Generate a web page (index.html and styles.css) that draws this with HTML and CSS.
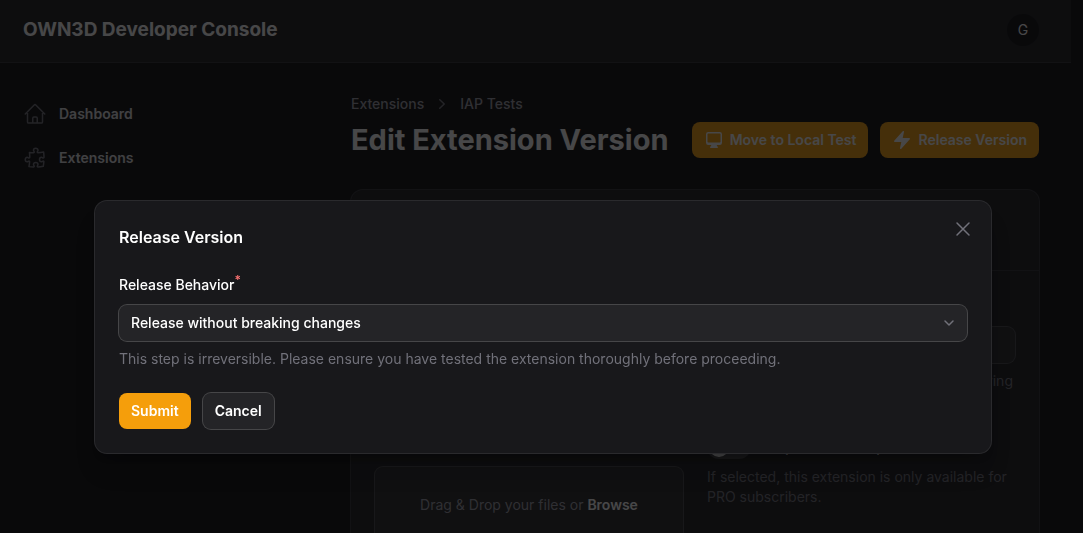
FILE: index.html
```html
<!DOCTYPE html>
<html lang="en">
<head>
<meta charset="utf-8">
<meta name="viewport" content="width=device-width, initial-scale=1">
<title>Edit Extension Version</title>
<link rel="stylesheet" href="styles.css">
</head>
<body>
<div class="page">
  <header class="topbar">
    <a class="brand" href="#">OWN3D Developer Console</a>
    <button class="avatar" type="button">G</button>
  </header>
  <div class="shell">
    <nav class="sidebar">
      <a class="nav-item" href="#">
        <svg class="icon-lg" viewBox="0 0 24 24" fill="none" stroke="currentColor" stroke-width="1.5" stroke-linecap="round" stroke-linejoin="round"><path d="m2.25 12 8.954-8.955c.44-.439 1.152-.439 1.591 0L21.75 12M4.5 9.75v10.125c0 .621.504 1.125 1.125 1.125H9.75v-4.875c0-.621.504-1.125 1.125-1.125h2.25c.621 0 1.125.504 1.125 1.125V21h4.125c.621 0 1.125-.504 1.125-1.125V9.75M8.25 21h8.25"/></svg>
        <span>Dashboard</span>
      </a>
      <a class="nav-item" href="#">
        <svg class="icon-lg" viewBox="0 0 24 24" fill="none" stroke="currentColor" stroke-width="1.5" stroke-linecap="round" stroke-linejoin="round"><path d="M14.25 6.087c0-.355.186-.676.401-.959.221-.29.349-.634.349-1.003 0-1.036-1.007-1.875-2.25-1.875s-2.25.84-2.25 1.875c0 .369.128.713.349 1.003.215.283.401.604.401.959v0a.64.64 0 0 1-.657.643 48.39 48.39 0 0 1-4.163-.3c.186 1.613.293 3.25.315 4.907a.656.656 0 0 1-.658.663v0c-.355 0-.676-.186-.959-.401a1.647 1.647 0 0 0-1.003-.349c-1.036 0-1.875 1.007-1.875 2.25s.84 2.25 1.875 2.25c.369 0 .713-.128 1.003-.349.283-.215.604-.401.959-.401v0c.31 0 .555.26.532.57a48.039 48.039 0 0 1-.642 5.056c1.518.19 3.058.309 4.616.354a.64.64 0 0 0 .657-.643v0c0-.355-.186-.676-.401-.959a1.647 1.647 0 0 1-.349-1.003c0-1.035 1.008-1.875 2.25-1.875 1.243 0 2.25.84 2.25 1.875 0 .369-.128.713-.349 1.003-.215.283-.4.604-.4.959v0c0 .333.277.599.61.58a48.1 48.1 0 0 0 5.427-.63 48.05 48.05 0 0 0 .582-4.717.532.532 0 0 0-.533-.57v0c-.355 0-.676.186-.959.401-.29.221-.634.349-1.003.349-1.035 0-1.875-1.007-1.875-2.25s.84-2.25 1.875-2.25c.37 0 .713.128 1.003.349.283.215.604.401.96.401v0a.656.656 0 0 0 .658-.663 48.422 48.422 0 0 0-.37-5.36c-1.886.342-3.81.574-5.766.689a.578.578 0 0 1-.61-.58v0Z"/></svg>
        <span>Extensions</span>
      </a>
    </nav>
    <main class="main">
      <div class="page-head">
        <div>
          <div class="crumbs">
            <a href="#">Extensions</a>
            <svg class="icon-md" viewBox="0 0 20 20" fill="currentColor"><path fill-rule="evenodd" d="M7.21 14.77a.75.75 0 0 1 .02-1.06L11.168 10 7.23 6.29a.75.75 0 1 1 1.04-1.08l4.5 4.25a.75.75 0 0 1 0 1.08l-4.5 4.25a.75.75 0 0 1-1.06-.02Z"/></svg>
            <a href="#">IAP Tests</a>
          </div>
          <h1 class="title">Edit Extension Version</h1>
        </div>
        <div class="actions">
          <button class="btn btn-primary" type="button">
            <svg class="icon-md" viewBox="0 0 20 20" fill="currentColor"><path fill-rule="evenodd" d="M2 4.25A2.25 2.25 0 0 1 4.25 2h11.5A2.25 2.25 0 0 1 18 4.25v8.5A2.25 2.25 0 0 1 15.75 15h-3.105a3.501 3.501 0 0 0 1.1 1.677A.75.75 0 0 1 13.26 18H6.74a.75.75 0 0 1-.484-1.323A3.501 3.501 0 0 0 7.355 15H4.25A2.25 2.25 0 0 1 2 12.75v-8.5Zm1.5 0a.75.75 0 0 1 .75-.75h11.5a.75.75 0 0 1 .75.75v7.5a.75.75 0 0 1-.75.75H4.25a.75.75 0 0 1-.75-.75v-7.5Z"/></svg>
            Move to Local Test
          </button>
          <button class="btn btn-primary" type="button">
            <svg class="icon-md" viewBox="0 0 20 20" fill="currentColor"><path d="M11.983 1.907a.75.75 0 0 0-1.292-.657l-8.5 9.5A.75.75 0 0 0 2.75 12h6.572l-1.305 6.093a.75.75 0 0 0 1.292.657l8.5-9.5A.75.75 0 0 0 17.25 8h-6.572l1.305-6.093Z"/></svg>
            Release Version
          </button>
        </div>
      </div>
      <section class="card">
        <div class="card-head"></div>
        <div class="fields">
          <div class="field">
            <label class="label" for="name">Name</label>
            <input class="input" id="name" type="text">
            <p class="help">The name of this version, as it is listed in the console and in the store.</p>
          </div>
          <div class="field">
            <label class="label" for="version">Version</label>
            <input class="input" id="version" type="text">
            <p class="help">The version number is visible to buyers during the installation.</p>
          </div>
          <div class="field">
            <label class="label" for="archive">Archive</label>
            <div class="drop">Drag &amp; Drop your files or&nbsp;<button class="browse" id="archive" type="button">Browse</button></div>
          </div>
          <div class="field">
            <div class="toggle-row">
              <input class="toggle" id="pro" type="checkbox" role="switch">
              <label class="label" for="pro">Requires Subscription</label>
            </div>
            <p class="help">If selected, this extension is only available for PRO subscribers.</p>
          </div>
        </div>
      </section>
    </main>
  </div>
</div>

<div class="overlay">
  <form class="modal" role="dialog" aria-modal="true" aria-labelledby="modal-title">
    <button class="close" type="button" aria-label="Close">
      <svg class="icon-lg" viewBox="0 0 24 24" fill="none" stroke="currentColor" stroke-width="1.5" stroke-linecap="round" stroke-linejoin="round"><path d="M6 18 18 6M6 6l12 12"/></svg>
    </button>
    <h2 class="modal-title" id="modal-title">Release Version</h2>
    <div class="field">
      <label class="label" for="behavior">Release Behavior<sup class="required">*</sup></label>
      <div class="select-wrap">
        <select class="select" id="behavior">
          <option>Release without breaking changes</option>
          <option>Release with breaking changes</option>
        </select>
        <svg class="icon-md select-arrow" viewBox="0 0 20 20" fill="none" stroke="currentColor" stroke-width="1.5" stroke-linecap="round" stroke-linejoin="round"><path d="m6 8 4 4 4-4"/></svg>
      </div>
      <p class="help">This step is irreversible. Please ensure you have tested the extension thoroughly before proceeding.</p>
    </div>
    <div class="modal-actions">
      <button class="btn btn-primary" type="button">Submit</button>
      <button class="btn btn-gray" type="button">Cancel</button>
    </div>
  </form>
</div>
</body>
</html>
```

FILE: styles.css
```css
*, *::before, *::after { box-sizing: border-box; }

body {
  margin: 0;
  background: #09090b;
  color: #fff;
  font: 400 14px/20px Inter, "Liberation Sans", sans-serif;
}

h1, h2, p { margin: 0; }
a { color: inherit; text-decoration: none; }
button, input, select { font: inherit; color: inherit; }
button { border: 0; padding: 0; background: none; cursor: pointer; }
svg { display: block; flex: none; }
.icon-md { width: 20px; height: 20px; }
.icon-lg { width: 24px; height: 24px; }

.page {
  height: 100vh;
  overflow: hidden;
  padding-right: 12px;
}

.topbar {
  display: flex;
  align-items: center;
  justify-content: space-between;
  height: 63px;
  padding: 0 32px 2px 23px;
  background: #18181b;
  border-bottom: 1px solid #2f2f32;
}
.brand { font-size: 19px; line-height: 28px; font-weight: 700; }
.avatar {
  width: 32px;
  height: 32px;
  border-radius: 50%;
  background: #09090b;
}

.shell { display: flex; }
.sidebar {
  flex: none;
  display: flex;
  flex-direction: column;
  gap: 4px;
  width: 319px;
  padding: 31px 15px;
}
.nav-item {
  display: flex;
  align-items: center;
  gap: 12px;
  padding: 8px;
  color: #e4e4e7;
  font-weight: 600;
}
.nav-item svg { color: #71717a; }

.main { flex: 1; min-width: 0; padding: 31px 32px; }
.page-head {
  display: flex;
  align-items: flex-end;
  justify-content: space-between;
  gap: 16px;
  margin-bottom: 32px;
}
.crumbs {
  display: flex;
  align-items: center;
  gap: 8px;
  margin-bottom: 8px;
  color: #a1a1aa;
  font-weight: 500;
}
.crumbs svg { color: #71717a; }
.title { font-size: 29px; line-height: 36px; font-weight: 700; white-space: nowrap; }
.actions { display: flex; flex: none; gap: 12px; }

.btn {
  display: flex;
  align-items: center;
  gap: 6px;
  padding: 8px 12px;
  border-radius: 8px;
  font-weight: 600;
  white-space: nowrap;
}
.btn-primary { background: #f59e0b; }
.btn-gray { background: #242427; box-shadow: 0 0 0 1px #464648; }

.card {
  border-radius: 12px;
  background: #18181b;
  box-shadow: 0 0 0 1px #2f2f32;
}
.card-head { height: 81px; border-bottom: 1px solid #2f2f32; }
.fields {
  display: grid;
  grid-template-columns: 1fr 1fr;
  gap: 24px;
  padding: 24px;
}
.field { display: flex; flex-direction: column; gap: 8px; }
.label { line-height: 24px; font-weight: 500; }
.input {
  width: 100%;
  height: 36px;
  padding: 0 12px;
  border: 0;
  border-radius: 8px;
  background: #242427;
  box-shadow: 0 0 0 1px #464648;
}
.help { color: #71717a; }
.drop {
  display: flex;
  align-items: center;
  justify-content: center;
  height: 76px;
  border-radius: 8px;
  background: #242427;
  box-shadow: 0 0 0 1px #464648;
  color: #a1a1aa;
}
.browse { color: #fff; font-weight: 600; }

.toggle-row { display: flex; align-items: center; gap: 12px; }
.toggle {
  appearance: none;
  width: 44px;
  height: 24px;
  margin: 0;
  padding: 2px;
  border-radius: 12px;
  background: #3f3f46;
}
.toggle::before {
  content: "";
  display: block;
  width: 20px;
  height: 20px;
  border-radius: 50%;
  background: #fff;
}

.overlay {
  position: fixed;
  inset: 0;
  display: flex;
  align-items: flex-start;
  justify-content: center;
  padding: 201px 16px 0 19px;
  background: rgba(9, 9, 11, 0.75);
}
.modal {
  position: relative;
  display: flex;
  flex-direction: column;
  gap: 24px;
  width: 100%;
  max-width: 896px;
  padding: 24px;
  border-radius: 12px;
  background: #18181b;
  box-shadow: 0 0 0 1px #2a2a2d, 0 20px 25px -5px rgba(0, 0, 0, 0.2), 0 8px 10px -6px rgba(0, 0, 0, 0.2);
}
.close {
  position: absolute;
  top: 16px;
  right: 16px;
  color: #71717a;
}
.modal-title { font-size: 16px; line-height: 24px; font-weight: 600; }
.required { color: #f87171; font-size: 12px; line-height: 0; font-weight: 600; }

.select-wrap { display: grid; align-items: center; }
.select-wrap > * { grid-area: 1 / 1; }
.select {
  appearance: none;
  width: 100%;
  height: 36px;
  padding: 0 36px 0 12px;
  border: 0;
  border-radius: 8px;
  background: #242427;
  box-shadow: 0 0 0 1px #464648;
  font-weight: 500;
}
.select-arrow {
  justify-self: end;
  margin-right: 8px;
  color: #71717a;
  pointer-events: none;
}
.modal-actions { display: flex; gap: 12px; }
```
